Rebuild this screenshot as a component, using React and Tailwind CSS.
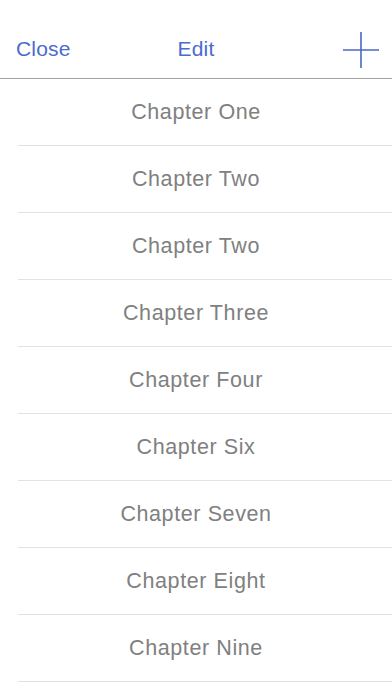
import React from "react";

const chapters = [
  "Chapter One",
  "Chapter Two",
  "Chapter Two",
  "Chapter Three",
  "Chapter Four",
  "Chapter Six",
  "Chapter Seven",
  "Chapter Eight",
  "Chapter Nine",
];

export default function App() {
  return (
    <div
      className="w-[392px] h-[696px] bg-white overflow-hidden"
      style={{ fontFamily: '"Liberation Sans", Arial, sans-serif' }}
    >
      <div className="h-[79px] pt-[20px] grid grid-cols-3 items-center border-b border-[#a3a3a3]">
        <span className="pl-[16px] text-[21px] leading-[26px] text-[#4a6bd0] tracking-[0.2px]">Close</span>
        <span className="text-center text-[21px] leading-[26px] text-[#4a6bd0] tracking-[0.2px]">Edit</span>
        <div className="flex justify-end pr-[12px]">
          <svg width="38" height="38" viewBox="0 0 38 38" className="mt-[2px]">
            <line x1="1" y1="19" x2="37" y2="19" stroke="#4a66c4" strokeWidth="1.6" />
            <line x1="19" y1="1" x2="19" y2="37" stroke="#4a66c4" strokeWidth="1.6" />
          </svg>
        </div>
      </div>
      <div className="flex flex-col">
        {chapters.map((c, i) => (
          <div key={i} className="relative h-[67px] flex items-center justify-center">
            <span className="text-[21.5px] text-[#808080] tracking-[0.6px]">{c}</span>
            <div className="absolute left-[18px] right-0 bottom-0 h-px bg-[#e3e3e3]" />
          </div>
        ))}
      </div>
    </div>
  );
}
